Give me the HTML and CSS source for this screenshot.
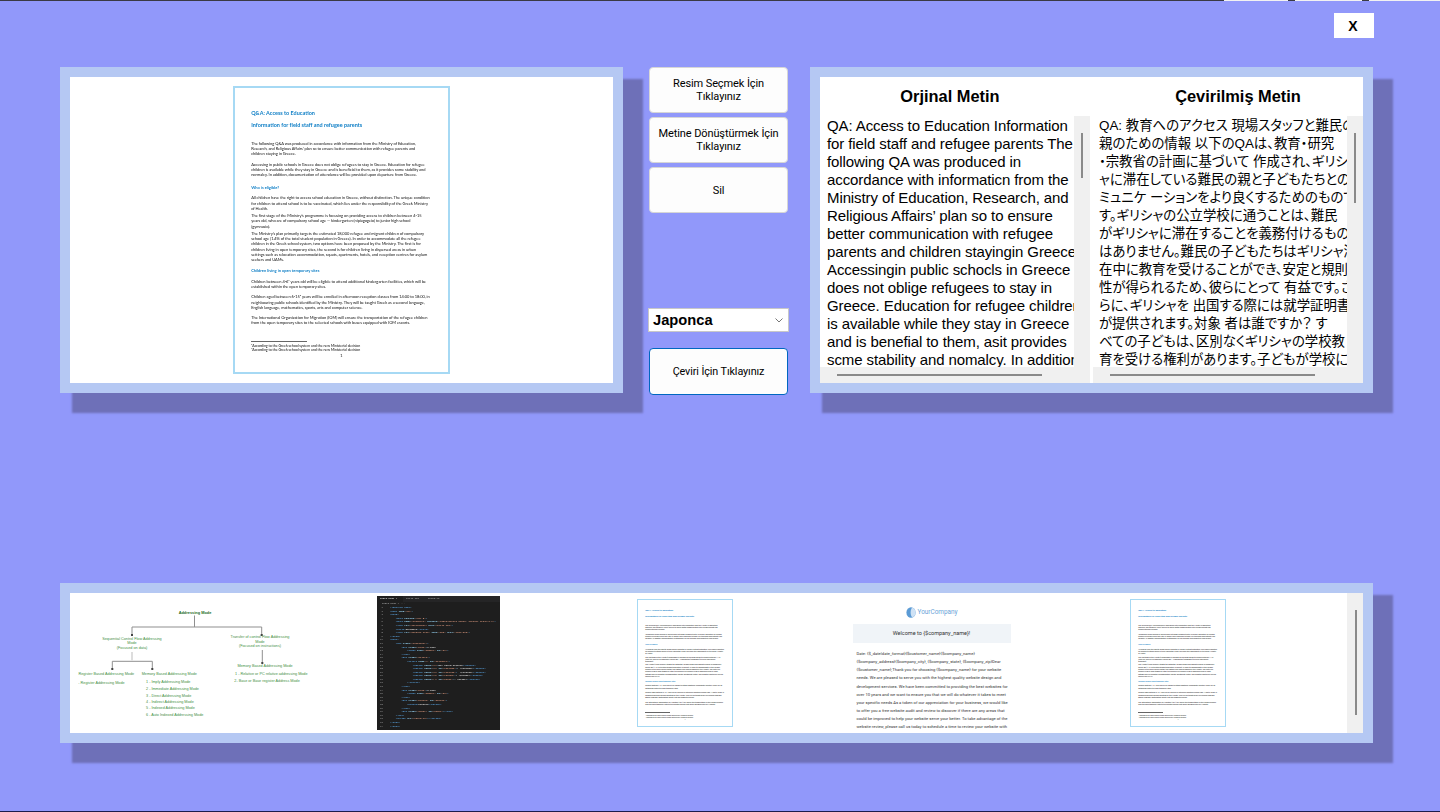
FILE: index.html
```html
<!DOCTYPE html>
<html lang="tr">
<head>
<meta charset="UTF-8">
<title>Resimden Metne Çeviri</title>
<link rel="stylesheet" href="styles.css">
</head>
<body>
<div class="screen">
  <div class="edge-top"><i class="edge-dark edge-a"></i><i class="edge-light edge-b"></i><i class="edge-dark edge-c"></i><i class="edge-light edge-d"></i><i class="edge-dark edge-c"></i><i class="edge-light edge-e"></i></div>
  <div class="close-row"><button class="close">X</button></div>

  <div class="top-row">
    <section class="panel preview">
      <div class="preview-view">
        <article class="doc doc-large">
          <h2>Q&amp;A: Access to Education</h2>
          <h2 class="second">Information for field staff and refugee parents</h2>
          <p class="first">The following Q&amp;A was produced in accordance with information from the Ministry of Education,<br>Research, and Religious Affairs’ plan so to ensure better communication with refugee parents and<br>children staying in Greece.</p>
          <p>Accessing in public schools in Greece does not oblige refugees to stay in Greece. Education for refugee<br>children is available while they stay in Greece and is beneficial to them, as it provides some stability and<br>normalcy. In addition, documentation of attendance will be provided upon departure from Greece.</p>
          <h3>Who is eligible?</h3>
          <p>All children have the right to access school education in Greece, without distinction. The unique condition<br>for children to attend school is to be vaccinated, which lies under the responsibility of the Greek Ministry<br>of Health.</p>
          <p class="tight">The first stage of the Ministry’s programme is focusing on providing access to children between 4-15<br>years old, who are of compulsory school age — kindergarten (nipiagogeio) to junior high school<br>(gymnasio).</p>
          <p class="tight">The Ministry’s plan primarily targets the estimated 18,000 refugee and migrant children of compulsory<br>school age (1.4% of the total student population in Greece). In order to accommodate all the refugee<br>children in the Greek school system, two options have been proposed by the Ministry. The first is for<br>children living in open temporary sites, the second is for children living in dispersed areas in urban<br>settings such as relocation accommodation, squats, apartments, hotels, and reception centres for asylum<br>seekers and UAMs.</p>
          <h3>Children living in open temporary sites</h3>
          <p>Children between 4-6¹ years old will be eligible to attend additional kindergarten facilities, which will be<br>established within the open temporary sites.</p>
          <p>Children aged between 6-15² years will be enrolled in afternoon reception classes from 14:00 to 18:00, in<br>neighbouring public schools identified by the Ministry. They will be taught Greek as a second language,<br>English language, mathematics, sports, arts and computer science.</p>
          <p>The International Organization for Migration (IOM) will ensure the transportation of the refugee children<br>from the open temporary sites to the selected schools with buses equipped with IOM escorts.</p>
          <hr>
          <p class="note">¹According to the Greek school system and the new Ministerial decision<br>²According to the Greek school system and the new Ministerial decision</p>
          <p class="pageno">1</p>
        </article>
      </div>
    </section>

    <nav class="controls">
      <button class="action">Resim Seçmek İçin Tıklayınız</button>
      <button class="action">Metine Dönüştürmek İçin Tıklayınız</button>
      <button class="action">Sil</button>
      <div class="select"><span>Japonca</span><svg class="chevron" width="8" height="5" viewBox="0 0 8 5"><path d="M.5.5 4 4 7.5.5" fill="none" stroke="#777" stroke-width="1"/></svg></div>
      <button class="action primary">Çeviri İçin Tıklayınız</button>
    </nav>

    <section class="panel translate">
      <div class="translate-view">
        <h1 class="title title-source">Orjinal Metin</h1>
        <h1 class="title title-target">Çevirilmiş Metin</h1>
        <div class="textbox">
          <div class="textbox-text">QA: Access to Education Information<br>for field staff and refugee parents The<br>following QA was produced in<br>accordance with informaticn from the<br>Ministry of Education, Research, and<br>Religious Affairs’ plan so to ensure<br>better communication with refugee<br>parents and children stayingin Greece<br>Accessingin public schocls in Greece<br>does not oblige refugees to stay in<br>Greece. Education for refugee children<br>is available while they stay in Greece<br>and is benefial to them, asit provides<br>scme stability and nomalcy. In addition</div>
          <div class="vbar"><i class="vthumb vthumb-a"></i></div>
          <div class="hbar"><i class="hthumb"></i></div>
          <div class="corner"></div>
        </div>
        <div class="textbox">
          <div class="textbox-text ja" lang="ja">QA: 教育へのアクセス 現場スタッフと難民の<br>親のための情報 以下のQAは、教育・研究<br>・宗教省の計画に基づいて 作成され、ギリシ<br>ャに滞在している難民の親と子どもたちとのコ<br>ミュニケ ーションをより良くするためのもので<br>す。ギリシャの公立学校に通うことは、難民<br>がギリシャに滞在することを義務付けるもので<br>はありません。難民の子どもたちはギリシャ滞<br>在中に教育を受けることができ、安定と規則<br>性が得られるため、彼らにとって 有益です。さ<br>らに、ギリシャを 出国する際には就学証明書<br>が提供されます。対象 者は誰ですか？ す<br>べての子どもは、区別なくギリシャの学校教<br>育を受ける権利があります。子どもが学校に</div>
          <div class="vbar"><i class="vthumb vthumb-b"></i></div>
          <div class="hbar"><i class="hthumb"></i></div>
          <div class="corner"></div>
        </div>
      </div>
    </section>
  </div>

  <section class="panel gallery">
    <div class="gallery-view">
      <div class="slot">
        <svg class="diagram" width="244" height="140" viewBox="70 593 244 140">
          <g class="d-lines">
            <path d="M194.5 615.5V627M132 635V627H261.7V635M112.3 669V661.3H152.3V669M262.3 650V663"/>
            <path class="d-faint" d="M132 652V660.5"/>
          </g>
          <g class="d-heads">
            <rect x="131" y="634" width="2" height="2"/><rect x="260.7" y="634" width="2" height="2"/><rect x="111.3" y="668" width="2" height="2"/><rect x="151.3" y="668" width="2" height="2"/><rect x="261.3" y="662" width="2" height="2"/>
          </g>
          <g class="d-text d-mid">
            <text class="d-bold" x="195" y="613.7">Addressing Mode</text>
            <text x="132" y="639.5">Sequential Control Flow Addressing</text>
            <text x="132" y="643.8">Mode</text>
            <text x="132" y="648.8">(Focused on data)</text>
            <text x="260" y="638.2">Transfer of control Flow Addressing</text>
            <text x="260" y="642.8">Mode</text>
            <text x="260" y="646.8">(Focused on instructions)</text>
            <text x="106.3" y="675.2">Register Based Addressing Mode</text>
            <text x="169.3" y="675.2">Memory Based Addressing Mode</text>
            <text x="265" y="666.5">Memory Based Addressing Mode</text>
          </g>
          <g class="d-text">
            <text x="78.3" y="683.5">- Register Addressing Mode</text>
            <text x="146" y="683.2">1 - Imply Addressing Mode</text>
            <text x="146" y="690.2">2 - Immediate  Addressing Mode</text>
            <text x="146" y="696.8">3 - Direct  Addressing Mode</text>
            <text x="146" y="702.8">4 - Indirect Addressing Mode</text>
            <text x="146" y="709.2">5 - Indexed Addressing Mode</text>
            <text x="146" y="715.5">6 - Auto Indexed Addressing Mode</text>
            <text x="235" y="674.8">1 - Relative or PC relative addressing Mode</text>
            <text x="234.3" y="681.8">2- Base or Base register Address Mode</text>
          </g>
        </svg>
      </div>
      <div class="slot">
        <div class="code">
          <div class="code-tabs"><span class="code-tab active">index.html ×</span><span class="code-tab">style.css</span><span class="code-tab">islem.js</span></div>
          <div class="code-crumb">index.html &gt; ...</div>
<pre class="code-body"><span class="n"> 1</span><span class="t">&lt;!DOCTYPE html&gt;</span>
<span class="n"> 2</span><span class="t">&lt;html</span> <span class="a">lang</span>=<span class="s">"en"</span><span class="t">&gt;</span>
<span class="n"> 3</span><span class="t">&lt;head&gt;</span>
<span class="n"> 4</span>    <span class="t">&lt;meta</span> <span class="a">charset</span>=<span class="s">"UTF-8"</span><span class="t">&gt;</span>
<span class="n"> 5</span>    <span class="t">&lt;meta</span> <span class="a">name</span>=<span class="s">"viewport"</span> <span class="a">content</span>=<span class="s">"width=device-width, initial-scale=1.0"</span><span class="t">&gt;</span>
<span class="n"> 6</span>    <span class="t">&lt;link</span> <span class="a">rel</span>=<span class="s">"stylesheet"</span> <span class="a">href</span>=<span class="s">"style.css"</span><span class="t">&gt;</span>
<span class="n"> 7</span>    <span class="t">&lt;title&gt;</span>Document<span class="t">&lt;/title&gt;</span>
<span class="n"> 8</span>    <span class="t">&lt;link</span> <span class="a">rel</span>=<span class="s">"website icon"</span> <span class="a">type</span>=<span class="s">"png"</span> <span class="a">href</span>=<span class="s">"logo.png"</span><span class="t">&gt;</span>
<span class="n"> 9</span><span class="t">&lt;/head&gt;</span>
<span class="n">10</span><span class="t">&lt;body&gt;</span>
<span class="n">11</span>    <span class="t">&lt;div</span> <span class="a">class</span>=<span class="s">"container"</span><span class="t">&gt;</span>
<span class="n">12</span>        <span class="t">&lt;div</span> <span class="a">class</span>=<span class="s">"box1"</span><span class="t">&gt;</span>1.Sayı
<span class="n">13</span>            <span class="t">&lt;input</span> <span class="a">type</span>=<span class="s">"number"</span> <span class="a">id</span>=<span class="s">"s1"</span><span class="t">&gt;</span>
<span class="n">14</span>        <span class="t">&lt;/div&gt;</span>
<span class="n">15</span>        <span class="t">&lt;div</span> <span class="a">class</span>=<span class="s">"select"</span><span class="t">&gt;</span>
<span class="n">16</span>            <span class="t">&lt;select</span> <span class="a">name</span>=<span class="s">""</span> <span class="a">id</span>=<span class="s">"islemler"</span><span class="t">&gt;</span>
<span class="n">17</span>                <span class="t">&lt;option</span> <span class="a">value</span>=<span class="s">"0"</span><span class="t">&gt;</span>Bir İşlem Seçiniz<span class="t">&lt;/option&gt;</span>
<span class="n">18</span>                <span class="t">&lt;option</span> <span class="a">value</span>=<span class="s">"1"</span> <span class="a">id</span>=<span class="s">"toplama"</span><span class="t">&gt;</span>+ (Toplama)<span class="t">&lt;/option&gt;</span>
<span class="n">19</span>                <span class="t">&lt;option</span> <span class="a">value</span>=<span class="s">"2"</span> <span class="a">id</span>=<span class="s">"cikarma"</span><span class="t">&gt;</span>- (Çıkarma)<span class="t">&lt;/option&gt;</span>
<span class="n">20</span>                <span class="t">&lt;option</span> <span class="a">value</span>=<span class="s">"3"</span> <span class="a">id</span>=<span class="s">"carpma"</span><span class="t">&gt;</span>* (Çarpma)<span class="t">&lt;/option&gt;</span>
<span class="n">21</span>                <span class="t">&lt;option</span> <span class="a">value</span>=<span class="s">"4"</span> <span class="a">id</span>=<span class="s">"bolme"</span><span class="t">&gt;</span>/ (Bölme)<span class="t">&lt;/option&gt;</span>
<span class="n">22</span>            <span class="t">&lt;/select&gt;</span>
<span class="n">23</span>        <span class="t">&lt;/div&gt;</span>
<span class="n">24</span>        <span class="t">&lt;div</span> <span class="a">class</span>=<span class="s">"box2"</span><span class="t">&gt;</span>2.Sayı
<span class="n">25</span>            <span class="t">&lt;input</span> <span class="a">type</span>=<span class="s">"number"</span> <span class="a">id</span>=<span class="s">"s2"</span><span class="t">&gt;</span>
<span class="n">26</span>        <span class="t">&lt;/div&gt;</span>
<span class="n">27</span>        <span class="t">&lt;div</span> <span class="a">class</span>=<span class="s">"button"</span> <span class="a">id</span>=<span class="s">"button"</span><span class="t">&gt;</span>
<span class="n">28</span>            <span class="t">&lt;button&gt;</span>Hesapla<span class="t">&lt;/button&gt;</span>
<span class="n">29</span>        <span class="t">&lt;/div&gt;</span>
<span class="n">30</span>        <span class="t">&lt;div</span> <span class="a">class</span>=<span class="s">"sonuc"</span> <span class="a">id</span>=<span class="s">"sonuc"</span><span class="t">&gt;&lt;/div&gt;</span>
<span class="n">31</span>    <span class="t">&lt;/div&gt;</span>
<span class="n">32</span>    <span class="t">&lt;script</span> <span class="a">src</span>=<span class="s">"islem.js"</span><span class="t">&gt;&lt;/script&gt;</span>
<span class="n">33</span><span class="t">&lt;/body&gt;</span>
<span class="n">34</span><span class="t">&lt;/html&gt;</span></pre>
        </div>
      </div>
      <div class="slot">
        <article class="doc doc-small">
          <h2>Q&amp;A: Access to Education</h2>
          <h2 class="second">Information for field staff and refugee parents</h2>
          <p class="first">The following Q&amp;A was produced in accordance with information from the Ministry of Education,<br>Research, and Religious Affairs’ plan so to ensure better communication with refugee parents and<br>children staying in Greece.</p>
          <p>Accessing in public schools in Greece does not oblige refugees to stay in Greece. Education for refugee<br>children is available while they stay in Greece and is beneficial to them, as it provides some stability and<br>normalcy. In addition, documentation of attendance will be provided upon departure from Greece.</p>
          <h3>Who is eligible?</h3>
          <p>All children have the right to access school education in Greece, without distinction. The unique condition<br>for children to attend school is to be vaccinated, which lies under the responsibility of the Greek Ministry<br>of Health.</p>
          <p class="tight">The first stage of the Ministry’s programme is focusing on providing access to children between 4-15<br>years old, who are of compulsory school age — kindergarten (nipiagogeio) to junior high school<br>(gymnasio).</p>
          <p class="tight">The Ministry’s plan primarily targets the estimated 18,000 refugee and migrant children of compulsory<br>school age (1.4% of the total student population in Greece). In order to accommodate all the refugee<br>children in the Greek school system, two options have been proposed by the Ministry. The first is for<br>children living in open temporary sites, the second is for children living in dispersed areas in urban<br>settings such as relocation accommodation, squats, apartments, hotels, and reception centres for asylum<br>seekers and UAMs.</p>
          <h3>Children living in open temporary sites</h3>
          <p>Children between 4-6¹ years old will be eligible to attend additional kindergarten facilities, which will be<br>established within the open temporary sites.</p>
          <p>Children aged between 6-15² years will be enrolled in afternoon reception classes from 14:00 to 18:00, in<br>neighbouring public schools identified by the Ministry. They will be taught Greek as a second language,<br>English language, mathematics, sports, arts and computer science.</p>
          <p>The International Organization for Migration (IOM) will ensure the transportation of the refugee children<br>from the open temporary sites to the selected schools with buses equipped with IOM escorts.</p>
          <hr>
          <p class="note">¹According to the Greek school system and the new Ministerial decision<br>²According to the Greek school system and the new Ministerial decision</p>
          <p class="pageno">1</p>
        </article>
      </div>
      <div class="slot">
        <article class="letter">
          <div class="letter-logo">
            <svg width="10" height="11" viewBox="0 0 10 11"><ellipse cx="5" cy="5.5" rx="4.6" ry="5.3" fill="#5b9bd5"/><path d="M6.4.5C4.2 2.4 3.8 8 6.4 10.5 8.8 9.2 9.6 7.3 9.6 5.5S8.6 1.4 6.4.5Z" fill="#cfe2f5"/></svg>
            <span>YourCompany</span>
          </div>
          <div class="letter-banner">Welcome to {$company_name}!</div>
          <p class="letter-body">Date: {$_date|date_format}{$customer_name}{$company_name}<br>{$company_address}{$company_city}, {$company_state}, {$company_zip}Dear<br>{$customer_name},Thank you for choosing {$company_name} for your website<br>needs. We are pleased to serve you with the highest quality website design and<br>development services. We have been committed to providing the best websites for<br>over 10 years and we want to ensure you that we will do whatever it takes to meet<br>your specific needs.As a token of our appreciation for your business, we would like<br>to offer you a free website audit and review to discover if there are any areas that<br>could be improved to help your website serve your better. To take advantage of the<br>website review, please call us today to schedule a time to review your website with</p>
        </article>
      </div>
      <div class="slot">
        <article class="doc doc-small">
          <h2>Q&amp;A: Access to Education</h2>
          <h2 class="second">Information for field staff and refugee parents</h2>
          <p class="first">The following Q&amp;A was produced in accordance with information from the Ministry of Education,<br>Research, and Religious Affairs’ plan so to ensure better communication with refugee parents and<br>children staying in Greece.</p>
          <p>Accessing in public schools in Greece does not oblige refugees to stay in Greece. Education for refugee<br>children is available while they stay in Greece and is beneficial to them, as it provides some stability and<br>normalcy. In addition, documentation of attendance will be provided upon departure from Greece.</p>
          <h3>Who is eligible?</h3>
          <p>All children have the right to access school education in Greece, without distinction. The unique condition<br>for children to attend school is to be vaccinated, which lies under the responsibility of the Greek Ministry<br>of Health.</p>
          <p class="tight">The first stage of the Ministry’s programme is focusing on providing access to children between 4-15<br>years old, who are of compulsory school age — kindergarten (nipiagogeio) to junior high school<br>(gymnasio).</p>
          <p class="tight">The Ministry’s plan primarily targets the estimated 18,000 refugee and migrant children of compulsory<br>school age (1.4% of the total student population in Greece). In order to accommodate all the refugee<br>children in the Greek school system, two options have been proposed by the Ministry. The first is for<br>children living in open temporary sites, the second is for children living in dispersed areas in urban<br>settings such as relocation accommodation, squats, apartments, hotels, and reception centres for asylum<br>seekers and UAMs.</p>
          <h3>Children living in open temporary sites</h3>
          <p>Children between 4-6¹ years old will be eligible to attend additional kindergarten facilities, which will be<br>established within the open temporary sites.</p>
          <p>Children aged between 6-15² years will be enrolled in afternoon reception classes from 14:00 to 18:00, in<br>neighbouring public schools identified by the Ministry. They will be taught Greek as a second language,<br>English language, mathematics, sports, arts and computer science.</p>
          <p>The International Organization for Migration (IOM) will ensure the transportation of the refugee children<br>from the open temporary sites to the selected schools with buses equipped with IOM escorts.</p>
          <hr>
          <p class="note">¹According to the Greek school system and the new Ministerial decision<br>²According to the Greek school system and the new Ministerial decision</p>
          <p class="pageno">1</p>
        </article>
      </div>
    </div>
    <div class="gallery-bar"><i class="gallery-thumb"></i></div>
  </section>

  <div class="edge-bottom"></div>
</div>
</body>
</html>
```
FILE: styles.css
```css
* { box-sizing: border-box; }
html, body { margin: 0; padding: 0; }
body { background: #9198fa; overflow: hidden; font-family: "Liberation Sans", Arial, sans-serif; color: #000; }
button { font: inherit; color: inherit; cursor: pointer; }

.screen { width: 1440px; height: 812px; display: flex; flex-direction: column; overflow: hidden; }

.edge-top { height: 1px; display: flex; flex: none; }
.edge-top i { display: block; height: 1px; }
.edge-dark { background: #3a3a44; }
.edge-light { background: #f2f2f2; }
.edge-a { flex: 0 0 1224px; }
.edge-b { flex: 0 0 64px; }
.edge-c { flex: 0 0 7px; }
.edge-d { flex: 0 0 67px; }
.edge-e { flex: 1; }
.edge-bottom { height: 1px; margin-top: auto; flex: none; background: #1c1c4c; }

.close-row { display: flex; justify-content: flex-end; padding: 12px 66px 0 0; flex: none; }
.close { width: 40px; height: 25px; border: 0; background: #fff; padding: 0 2px 0 0; font-size: 14px; font-weight: 700; }

.top-row { display: flex; align-items: flex-start; margin: 29px 0 0 60px; flex: none; }

.panel { background: #b5c8f3; padding: 10px; box-shadow: 16px 16px 2px 4px #6e70b8; }
.preview { width: 563px; height: 326px; }
.translate { width: 563px; height: 326px; margin-left: 21px; }

.preview-view { height: 100%; background: #fff; display: flex; justify-content: center; padding-top: 9px; }

.controls { width: 141px; margin-left: 25px; display: flex; flex-direction: column; align-items: center; }
.action { width: 139px; height: 46px; margin-bottom: 4px; padding: 0 4px; border: 1px solid #d6d6d6; border-radius: 4px; background: #fdfdfd; font-family: Roboto, "Liberation Sans", sans-serif; font-size: 11px; letter-spacing: -.1px; line-height: 13px; }
.action.primary { height: 47px; margin: 16px 0 0; border: 1px solid #0067c0; font-size: 10.8px; }
.select { width: 141px; height: 24px; margin-top: 91px; padding: 0 5px 0 4px; display: flex; align-items: center; justify-content: space-between; background: #fff; border: 1px solid #c8c8c8; font-size: 14.7px; font-weight: 700; }
.chevron { flex: none; }

.translate-view { height: 100%; background: #fff; display: grid; grid-template-columns: 270px 270px; grid-template-rows: 39px 267px; column-gap: 3px; }
.title { margin: 0; font-size: 16.4px; font-weight: 700; text-align: center; line-height: 39px; }
.title-source { padding-right: 10px; }
.title-target { padding-left: 20px; }

.textbox { display: grid; grid-template-columns: 254px 16px; grid-template-rows: 251px 16px; overflow: hidden; }
.textbox-text { padding: 1px 0 0 7px; font-size: 15px; letter-spacing: -.1px; line-height: 18px; white-space: nowrap; overflow: hidden; background: #fff; }
.textbox-text.ja { padding-left: 6px; font-size: 13.4px; letter-spacing: 0; font-family: "Liberation Sans", "Noto Sans CJK JP", sans-serif; font-feature-settings: "palt"; }
.vbar { background: #f0f0f0; padding: 17px 0 0 7px; }
.vthumb { display: block; width: 2px; background: #8a8a8a; }
.vthumb-a { height: 45px; }
.vthumb-b { height: 70px; }
.hbar { background: #f0f0f0; padding: 7px 0 0 17px; }
.hthumb { display: block; width: 205px; height: 2px; background: #8a8a8a; }
.corner { background: #f0f0f0; }

.gallery { width: 1313px; height: 160px; margin: 188px 0 0 60px; display: flex; flex: none; }
.gallery-view { flex: 1; display: flex; background: #fff; overflow: hidden; }
.gallery-bar { width: 16px; flex: none; background: #f0f0f0; padding: 17px 0 0 8px; }
.gallery-thumb { display: block; width: 2px; height: 105px; background: #8a8a8a; }
.slot { flex: 0 0 246.5px; height: 140px; padding-right: 2.5px; display: flex; justify-content: center; align-items: center; overflow: hidden; }

.doc { flex: none; width: 54.25em; height: 72em; padding: 5.7em 0 0 4.05em; border: .5em solid #a6d9f4; background: #fff; color: #111; font-family: Lato, "Liberation Sans", sans-serif; line-height: 1.3em; white-space: nowrap; overflow: hidden; }
.doc-large { font-size: 4px; filter: blur(.2px); }
.doc-small { font-size: 1.77px; }
.doc h2, .doc h3 { margin: 0; color: #0f7fc6; font-weight: 700; }
.doc h2 { font-size: 1.37em; line-height: .95em; }
.doc h2.second { margin-top: 1.32em; }
.doc h3 { margin-top: 1.9em; font-size: 1em; line-height: 1.3em; }
.doc p.tight + h3 { margin-top: 1.45em; }
.doc p { margin: 1.33em 0 0; letter-spacing: -.014em; }
.doc p.first { margin-top: 3.1em; }
.doc p.tight { margin-top: .55em; }
.doc hr { width: 14em; height: 0; margin: 3.8em 0 0; border: 0; border-top: .12em solid #666; }
.doc p.note { margin-top: .5em; font-size: .9em; line-height: 1.3em; }
.doc p.pageno { margin: 0; text-align: center; padding-right: 4.05em; line-height: 1.3em; }

.letter { width: 158px; height: 140px; align-self: flex-start; font-family: Roboto, "Liberation Sans", sans-serif; overflow: hidden; }
.letter-logo { height: 31px; padding-top: 7px; display: flex; justify-content: center; align-items: center; gap: 2px; color: #6aa3d8; font-size: 6.4px; }
.letter-banner { height: 19px; background: #f0f4f8; text-align: center; font-size: 5.5px; line-height: 19px; color: #333; }
.letter-body { margin: 7px 0 0; padding-left: 4px; font-size: 4.15px; line-height: 8.13px; color: #333; white-space: nowrap; }

.diagram { display: block; flex: none; }
.d-lines path { fill: none; stroke: #8f8f8f; stroke-width: 1; }
.d-lines .d-faint { stroke: #dddddd; stroke-width: 2; }
.d-heads rect { fill: #444; }
.d-text text { font-family: "Liberation Sans", Arial, sans-serif; font-size: 3.75px; fill: #3f8f3f; }
.d-mid text { text-anchor: middle; }
.d-text .d-bold { fill: #1d6b1d; font-weight: 700; font-size: 3.9px; }

.code { width: 123px; height: 134px; background: #1e1e1e; overflow: hidden; font-family: "Liberation Mono", monospace; font-size: 2.38px; font-weight: 700; color: #d4d4d4; filter: blur(.25px); }
.code-tabs { height: 6px; display: flex; background: #252526; line-height: 6px; }
.code-tab { padding: 0 6px 0 3px; color: #9a9a9a; }
.code-tab.active { background: #1e1e1e; color: #d8d8d8; }
.code-crumb { height: 4px; padding-left: 5px; color: #999; line-height: 4px; }
.code-body { margin: 0; padding-left: 3px; font: inherit; line-height: 3.6px; white-space: pre; }
.code-body .n { display: inline-block; width: 10px; color: #858585; }
.code-body .t { color: #569cd6; }
.code-body .a { color: #9cdcfe; }
.code-body .s { color: #ce9178; }
```
